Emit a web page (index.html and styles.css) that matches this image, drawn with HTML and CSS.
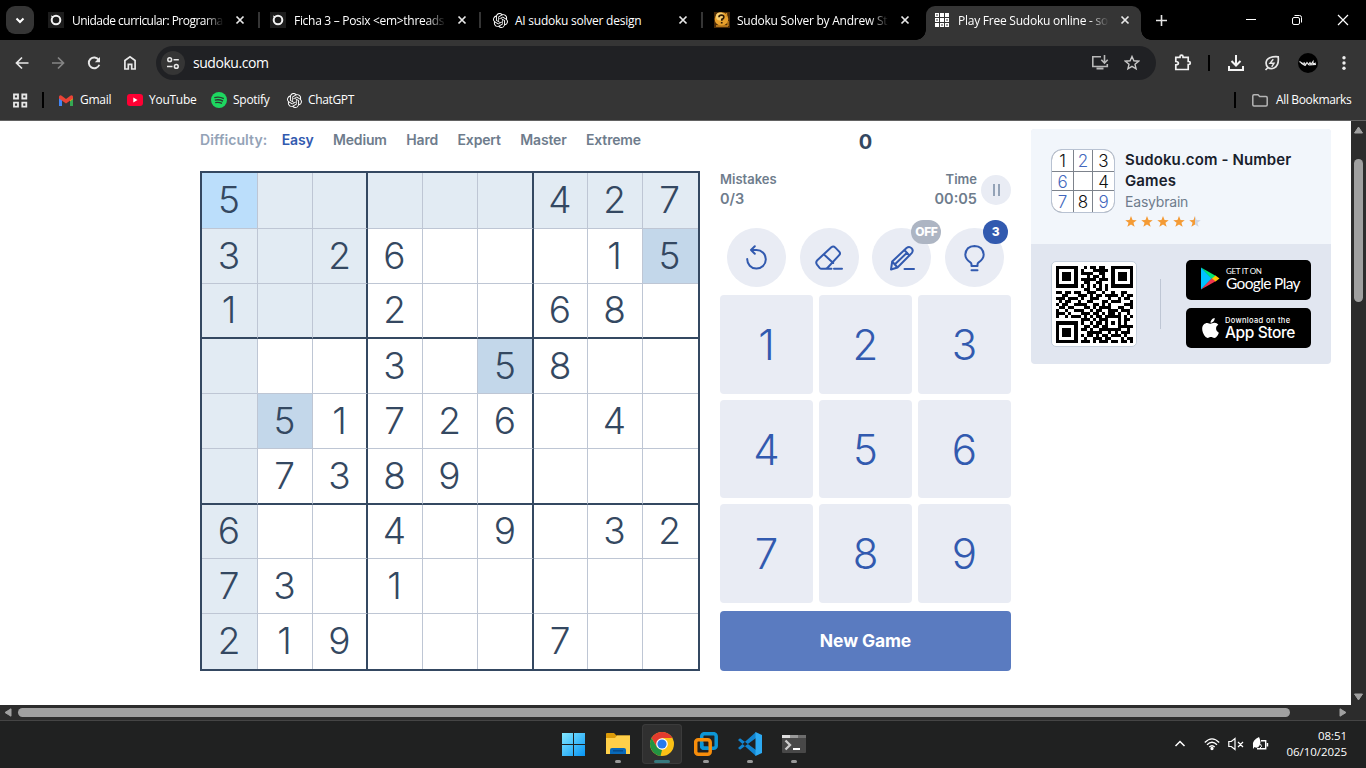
FILE: index.html
```html
<!DOCTYPE html>
<html lang="en">
<head>
<meta charset="utf-8">
<title>Play Free Sudoku online</title>
<link rel="stylesheet" href="styles.css">
</head>
<body>
<svg class="defs" width="0" height="0">
  <symbol id="openai" viewBox="0 0 24 24"><path fill="currentColor" d="M22.2819 9.8211a5.9847 5.9847 0 0 0-.5157-4.9108 6.0462 6.0462 0 0 0-6.5098-2.9A6.0651 6.0651 0 0 0 4.9807 4.1818a5.9847 5.9847 0 0 0-3.9977 2.9 6.0462 6.0462 0 0 0 .7427 7.0966 5.98 5.98 0 0 0 .511 4.9107 6.051 6.051 0 0 0 6.5146 2.9001A5.9847 5.9847 0 0 0 13.2599 24a6.0557 6.0557 0 0 0 5.7718-4.2058 5.9894 5.9894 0 0 0 3.9977-2.9001 6.0557 6.0557 0 0 0-.7475-7.0729zm-9.022 12.6081a4.4755 4.4755 0 0 1-2.8764-1.0408l.1419-.0804 4.7783-2.7582a.7948.7948 0 0 0 .3927-.6813v-6.7369l2.02 1.1686a.071.071 0 0 1 .038.052v5.5826a4.504 4.504 0 0 1-4.4945 4.4944zm-9.6607-4.1254a4.4708 4.4708 0 0 1-.5346-3.0137l.142.0852 4.783 2.7582a.7712.7712 0 0 0 .7806 0l5.8428-3.3685v2.3324a.0804.0804 0 0 1-.0332.0615L9.74 19.9502a4.4992 4.4992 0 0 1-6.1408-1.6464zM2.3408 7.8956a4.485 4.485 0 0 1 2.3655-1.9728V11.6a.7664.7664 0 0 0 .3879.6765l5.8144 3.3543-2.0201 1.1685a.0757.0757 0 0 1-.071 0l-4.8303-2.7865A4.504 4.504 0 0 1 2.3408 7.872zm16.5963 3.8558L13.1038 8.364 15.1192 7.2a.0757.0757 0 0 1 .071 0l4.8303 2.7913a4.4944 4.4944 0 0 1-.6765 8.1042v-5.6772a.79.79 0 0 0-.407-.667zm2.0107-3.0231l-.142-.0852-4.7735-2.7818a.7759.7759 0 0 0-.7854 0L9.409 9.2297V6.8974a.0662.0662 0 0 1 .0284-.0615l4.8303-2.7866a4.4992 4.4992 0 0 1 6.6802 4.66zM8.3065 12.863l-2.02-1.1638a.0804.0804 0 0 1-.038-.0567V6.0742a4.4992 4.4992 0 0 1 7.3757-3.4537l-.142.0805L8.704 5.459a.7948.7948 0 0 0-.3927.6813zm1.0976-2.3654l2.602-1.4998 2.6069 1.4998v2.9994l-2.5974 1.4997-2.6067-1.4997Z"/></symbol>
  <symbol id="close" viewBox="0 0 16 16"><path d="M4.5 4.5l7 7M11.5 4.5l-7 7" stroke="#e8e8e8" stroke-width="1.7"/></symbol>
  <symbol id="moodle" viewBox="0 0 16 16"><path fill="#1c1c1c" d="M0 0h16v16H0z"/><circle cx="8" cy="8" r="4.3" fill="none" stroke="#f4f4f4" stroke-width="2"/><path d="M3 4l3 1" stroke="#f4f4f4"/></symbol>
  <symbol id="star" viewBox="0 0 12 12"><path d="M6 .1l1.55 3.900 4.200.150-3.300 2.600 1.200 4.100L6 8.550l-3.650 2.300 1.200-4.100L.25 4.150l4.200-.15z"/></symbol>
</svg>

<header class="browser">
  <div class="tabs">
    <div class="tab-search"><svg width="28" height="28"><path d="M10.5 12.5l3.5 3.5 3.5-3.5" fill="none" stroke="#fff" stroke-width="2"/></svg></div>
    <div class="tab t1"><svg width="16" height="16"><use href="#moodle"/></svg><span class="title fade">Unidade curricular: Programa</span><svg width="16" height="16"><use href="#close"/></svg></div>
    <div class="tab t2"><svg width="16" height="16"><use href="#moodle"/></svg><span class="title fade">Ficha 3 – Posix &lt;em&gt;threads</span><svg width="16" height="16"><use href="#close"/></svg></div>
    <div class="tab t3"><svg width="15" height="15"><use href="#openai"/></svg><span class="title">AI sudoku solver design</span><svg width="16" height="16"><use href="#close"/></svg></div>
    <div class="tab t4"><svg width="16" height="16"><path fill="#4a2b08" d="M0 0h16v16H0z"/><circle cx="7.5" cy="7" r="6.8" fill="#e7a02c"/><circle cx="6" cy="4.5" r="4" fill="#f8cf71"/><path d="M5 5.2q0-2 2.5-2t2.300 2q0 1.300-2 2.200v1.300M7.700 10v1.600" fill="none" stroke="#2d1904" stroke-width="1.700"/><path d="M2 14h12M12.500 1v4M14 9v5" stroke="#d28c22" stroke-width="1.300"/></svg><span class="title fade">Sudoku Solver by Andrew St</span><svg width="16" height="16"><use href="#close"/></svg></div>
    <div class="tab active"><svg width="16" height="16" fill="#fff"><path d="M1 1h4v4H1zM6 1h4v4H6zM11 1h4v4h-4zM1 6h4v4H1zM6 6h4v4H6zM11 6h4v4h-4zM1 11h4v4H1zM6 11h4v4H6zM11 11h4v4h-4z"/><path fill="#444" d="M2.300 2.300h1.400v1.400H2.300zM2.300 7.300h1.400v1.400H2.300zM12.300 7.300h1.400v1.400h-1.400zM7.300 12.300h1.400v1.400H7.300zM12.300 12.300h1.400v1.400h-1.400z"/></svg><span class="title fade">Play Free Sudoku online - so</span><svg width="16" height="16"><use href="#close"/></svg></div>
    <svg class="newtab" width="40" height="40"><path d="M15 20.500h11M20.500 15v11" stroke="#e5e5e5" stroke-width="1.600"/></svg>
    <div class="window-buttons">
      <svg width="46" height="40"><path d="M18 19.500h10" stroke="#fff"/></svg>
      <svg width="46" height="40" fill="none" stroke="#fff"><rect x="18.500" y="17.500" width="7" height="7" rx="1.500"/><path d="M20.500 15.500h5a2 2 0 0 1 2 2v5"/></svg>
      <svg width="46" height="40"><path d="M18 15l10 10M28 15l-10 10" stroke="#fff" stroke-width="1.200"/></svg>
    </div>
  </div>

  <div class="toolbar">
    <svg class="tool" viewBox="0 0 36 36"><path d="M24.500 18H13M18 12.500L12.500 18l5.500 5.500" fill="none" stroke="#e8e8e8" stroke-width="1.700"/></svg>
    <svg class="tool" viewBox="0 0 36 36"><path d="M12 18h11.500M18 12.500l5.500 5.500-5.500 5.500" fill="none" stroke="#858585" stroke-width="1.700"/></svg>
    <svg class="tool" viewBox="0 0 36 36"><path d="M22.800 15a5.400 5.400 0 1 0 .5 4.700" fill="none" stroke="#e8e8e8" stroke-width="1.900"/><path d="M24 12v5.200h-5.200z" fill="#e8e8e8"/></svg>
    <svg class="tool" viewBox="0 0 36 36"><path d="M12.900 24v-8.500L18 11.800l5.100 3.700V24h-3.400v-4.700h-3.400V24z" fill="none" stroke="#e8e8e8" stroke-width="1.700"/></svg>
    <div class="omnibox">
      <span class="site"><svg width="24" height="24" fill="none" stroke="#e8e8e8" stroke-width="1.500"><circle cx="8.700" cy="8.700" r="1.900"/><path d="M12.500 8.700h5.300M6 15.400h5.500"/><circle cx="15.300" cy="15.400" r="1.900"/></svg></span>
      <span class="url">sudoku.com</span>
      <svg class="install" width="18" height="16" fill="none" stroke="#b8b8b8" stroke-width="1.600"><path d="M10 1.800H1.800v9.700h14.500V9"/><path d="M5.500 13.500h7" stroke-width="2"/><path d="M13.500 0v7.500M10.300 4.800l3.200 3.200 3.200-3.200"/></svg>
      <svg width="16" height="16"><path d="M8 1.500l1.900 4.300 4.700.4-3.600 3.100 1.100 4.600L8 11.400l-4.100 2.500L5 9.300 1.400 6.200l4.700-.4z" fill="none" stroke="#c8c8c8" stroke-width="1.400"/></svg>
    </div>
    <svg class="tool ext" viewBox="0 0 36 36"><path d="M10.800 12.300h4.200v-.9q0-1.300 1.500-1.300t1.500 1.300v.9h5.200v4.200h.6q1.500 0 1.500 1.500t-1.500 1.500h-.6v5H10.800v-4.600q2.600-.2 2.600-1.700t-2.600-1.700z" fill="none" stroke="#f2f2f2" stroke-width="1.700"/></svg>
    <i class="rule"></i>
    <svg class="tool" viewBox="0 0 36 36"><path d="M18 10v10M13.500 16l4.500 4.500 4.500-4.500M11 21v4h14v-4" fill="none" stroke="#f4f4f4" stroke-width="2"/></svg>
    <svg class="tool" viewBox="0 0 36 36"><path d="M24.200 11.800q-11-.7-12 5-.6 3.600 1.800 5.700 2.800 2 6 .5 5.200-2.200 4.200-11.200zM14 22.500L11.500 25" fill="none" stroke="#e8e8e8" stroke-width="1.700"/><path d="M19.300 14.200l-3.300 4h4l-2.300 3.600" fill="none" stroke="#e8e8e8" stroke-width="1.400"/></svg>
    <svg class="tool" viewBox="0 0 36 36"><circle cx="18" cy="18" r="10" fill="#000"/><path d="M9.500 16.500l3 2 2-.5 1 2 1.500-2.500 1.500 2 1.500-2 1 2 2-3v2.500l3-1M11 18l4 2.500M19 20l7-.5" fill="none" stroke="#ededed" stroke-width="1.100"/></svg>
    <svg class="tool" viewBox="0 0 36 36" fill="#eee"><circle cx="18" cy="12.800" r="1.700"/><circle cx="18" cy="18" r="1.700"/><circle cx="18" cy="23.200" r="1.700"/></svg>
  </div>

  <div class="bookmarks">
    <svg width="16" height="15" fill="none" stroke="#e8e8e8" stroke-width="1.800"><path d="M2 1.500h4v4H2zM10.300 1.500h4v4h-4zM2 9.700h4v4H2zM10.300 9.700h4v4h-4z"/></svg>
    <i class="rule"></i>
    <span class="bm gmail"><svg width="14" height="11"><path d="M0 2v9h3V4z" fill="#4285f4"/><path d="M14 2v9h-3V4z" fill="#34a853"/><path d="M11 1.200L14 2v2l-3 2.200z" fill="#fbbc04"/><path d="M0 1.500Q1-.5 3 1l4 3 4-3q2-1.500 3 .5v2L7 8.500 0 3.500z" fill="#ea4335"/></svg><span>Gmail</span></span>
    <span class="bm youtube"><svg width="16" height="12"><rect width="16" height="12" rx="3" fill="#f03"/><path d="M6.300 3.500v5L10.500 6z" fill="#fff"/></svg><span>YouTube</span></span>
    <span class="bm spotify"><svg width="16" height="16"><circle cx="8" cy="8" r="8" fill="#1ed760"/><path d="M3.300 5.600q5-1.500 9.500 1M3.800 8.200q4.300-1.200 8.200.9M4.200 10.600q3.600-.9 6.800.8" fill="none" stroke="#2b3a30" stroke-width="1.300"/></svg><span>Spotify</span></span>
    <span class="bm chatgpt"><svg width="15" height="15"><use href="#openai"/></svg><span>ChatGPT</span></span>
    <i class="rule last"></i>
    <span class="bm all"><svg width="16" height="13"><path d="M.8 2q0-1.200 1.200-1.200h4l1.700 1.700H14q1.200 0 1.200 1.200v7q0 1.200-1.200 1.200H2q-1.200 0-1.200-1.200z" fill="none" stroke="#b5b5b5" stroke-width="1.500"/></svg><span>All Bookmarks</span></span>
  </div>
</header>

<div class="viewport">
  <main class="page">
    <section class="game">
      <nav class="levels"><span class="label">Difficulty:</span><b class="on">Easy</b><b>Medium</b><b>Hard</b><b>Expert</b><b>Master</b><b>Extreme</b></nav>
      <div class="board" id="board"></div>
    </section>
    <section class="controls">
      <div class="score">0</div>
      <div class="stats">
        <div class="stat"><span>Mistakes</span><strong>0/3</strong></div>
        <div class="stat time"><span>Time</span><strong>00:05</strong></div>
        <div class="pause"><i></i><i></i></div>
      </div>
      <div class="actions">
        <div class="round"><svg width="32" height="32"><path d="M7.200 17a9.300 9.300 0 1 0 9.300-9h-5.500M14.800 4.200L11 8l3.800 3.800"/></svg></div>
        <div class="round"><svg width="32" height="32"><path d="M4.300 18.200L18.300 5.300q2-1.600 3.800.1l4.300 4.500q1.300 1.600-.2 3.200L14.800 25.500q-1 1.200-2.600 1.200H8.600q-1.200 0-2-.9l-2.600-3.200q-1.700-2.400.3-4.400zM11 12.500l9.200 8.500M11 26.700h7.500M21 26.700h8"/></svg></div>
        <div class="round"><svg width="32" height="32"><path d="M5 27.500l1.200-8L20.500 6q2.700-2.200 5 .1t.2 5L11.500 25.500zM6.200 19.500l5.300 6M18.300 8l5.300 5.600M8.700 22.500L21 10.700M18.500 27h9.500"/></svg><span class="badge off">OFF</span></div>
        <div class="round"><svg width="32" height="32"><path d="M12.500 24v-1.500q0-1.300-1.200-2.200Q6.300 17 6.300 12.500 7 4.300 15.500 3.900q8.500.4 9.200 8.600 0 4.500-5 7.800-1.200.9-1.200 2.200V24zM12.500 28.300h6"/></svg><span class="badge hint">3</span></div>
      </div>
      <div class="numpad"><b>1</b><b>2</b><b>3</b><b>4</b><b>5</b><b>6</b><b>7</b><b>8</b><b>9</b></div>
      <div class="new-game">New Game</div>
    </section>
    <aside class="promo">
      <div class="app">
        <div class="app-icon"><i>1</i><i class="b">2</i><i>3</i><i class="b">6</i><i></i><i>4</i><i class="b">7</i><i>8</i><i class="b">9</i></div>
        <div class="app-text">
          <h2>Sudoku.com - Number Games</h2>
          <p>Easybrain</p>
          <div class="stars"><svg><use href="#star"/></svg><svg><use href="#star"/></svg><svg><use href="#star"/></svg><svg><use href="#star"/></svg><svg viewBox="0 0 12 12"><path fill="#cfd6e3" d="M6 .1l1.550 3.900 4.200.150-3.300 2.600 1.200 4.100L6 8.550z"/><path d="M6 .1L4.450 4 .25 4.150l3.300 2.600-1.200 4.100L6 8.550z"/></svg></div>
        </div>
      </div>
      <div class="stores">
        <div class="qr"><svg id="qr" width="77" height="77" viewBox="0 0 25 25" shape-rendering="crispEdges"></svg></div>
        <i class="divider"></i>
        <div class="links">
          <div class="store google"><svg width="20" height="23"><path d="M1 .5v22L12 11.500z" fill="#00c3ff"/><path d="M1 .5L16 9l-4 3z" fill="#00e676"/><path d="M1 22.500L16 14l-4-3z" fill="#f0364d"/><path d="M15.500 8.500l4 3-4 3-3.500-3z" fill="#ffc400"/></svg><span><small>GET IT ON</small>Google Play</span></div>
          <div class="store apple"><svg width="17" height="22" viewBox="0 28 384 456" fill="#fff"><path d="M318.700 268.700c-.2-36.700 16.400-64.400 50-84.800-18.800-26.900-47.200-41.700-84.700-44.600-35.500-2.800-74.300 20.700-88.500 20.700-15 0-49.400-19.700-76.400-19.700C63.300 141.200 4 184.800 4 273.500q0 39.300 14.400 81.200c12.800 36.700 59 126.700 107.200 125.200 25.200-.6 43-17.900 75.800-17.900 31.800 0 48.300 17.900 76.400 17.900 48.600-.7 90.400-82.500 102.600-119.300-65.200-30.700-61.700-90-61.700-91.900zm-56.600-164.200c27.300-32.400 24.800-61.900 24-72.500-24.100 1.400-52 16.400-67.900 34.900-17.500 19.800-27.800 44.300-25.600 71.900 26.100 2 49.900-11.400 69.500-34.300z"/></svg><span><small>Download on the</small>App Store</span></div>
        </div>
      </div>
    </aside>
  </main>
  <div class="vscroll">
    <svg width="11" height="8"><path d="M5.500 1L9.500 7h-8z" stroke="#a0a0a0" stroke-linejoin="round"/></svg><i></i><svg class="end" width="11" height="8"><path d="M5.500 7L1.500 1h8z" stroke="#a0a0a0" stroke-linejoin="round"/></svg>
  </div>
</div>
<div class="hscroll"><svg width="8" height="9"><path d="M1 4.500L7 .8v7.400z" stroke="#a0a0a0" stroke-linejoin="round"/></svg><i></i><svg width="8" height="9"><path d="M7 4.500L1 .8v7.400z" stroke="#a0a0a0" stroke-linejoin="round"/></svg></div>

<footer class="taskbar">
  <div class="apps">
    <span><svg width="24" height="24"><defs><linearGradient id="win" x2="1" y2="1"><stop stop-color="#83e8ff"/><stop offset="1" stop-color="#0795f5"/></linearGradient></defs><path fill="url(#win)" d="M0 1h11v11H0zM12 1h11v11H12zM0 13h11v11H0zM12 13h11v11H12z"/></svg></span>
    <span class="run"><svg width="24" height="24"><path d="M0 2q0-1 1-1h7l2.500 2.500H24V10H0z" fill="#dc9b08"/><path d="M0 6h9l2-2.500h13V22H0z" fill="#ffd04a"/><path d="M4 22v-4q0-2 2-2h12q2 0 2 2v4z" fill="#0869ba"/><path d="M7 18.800h10" stroke="#064b8d" stroke-width="1.500"/></svg></span>
    <span class="run current"><svg width="24" height="24"><circle cx="12" cy="12" r="12" fill="#fbc116"/><path d="M1.600 6A12 12 0 0 1 22.400 6H12L6.800 15z" fill="#e33b2e"/><path d="M1.600 6l5.200 9 5.200 3-1.500 5.900A12 12 0 0 1 1.600 6z" fill="#229342"/><circle cx="12" cy="12" r="5.800" fill="#fff"/><circle cx="12" cy="12" r="4.600" fill="#2679ed"/></svg></span>
    <span class="run"><svg width="24" height="24" fill="none" stroke-width="3.500"><rect x="7.700" y="1.700" width="14.500" height="14.500" rx="2.500" stroke="#0d96d6"/><rect x="1.700" y="7.700" width="14.500" height="14.500" rx="2.500" stroke="#f78d0b"/><path d="M7.700 11v3q0 2.200 2.500 2.200h4" stroke="#0d96d6"/></svg></span>
    <span class="run"><svg width="24" height="24"><path d="M0 8l2-1.700L18 18v6zM0 16l2 1.700L18 6V0z" fill="#1184d0"/><path d="M17.500 0L24 3v18l-6.500 3z" fill="#2daaf2"/></svg></span>
    <span class="run"><svg width="24" height="24"><rect y="3" width="24" height="18" rx="1" fill="#484848"/><path d="M0 3h8v3H0z" fill="#ddd"/><path d="M8 3h8v3H8z" fill="#999"/><path d="M16 3h8v3h-8z" fill="#6d6d6d"/><path d="M3.500 8.500L8 13l-4.500 4.500" fill="none" stroke="#ccc" stroke-width="2.300"/><path d="M11 17h7" stroke="#fff" stroke-width="2"/></svg></span>
  </div>
  <div class="tray">
    <svg width="12" height="12"><path d="M1.500 8L6 3.500 10.500 8" fill="none" stroke="#fff" stroke-width="1.500"/></svg>
    <svg class="wifi" width="16" height="14" fill="none" stroke="#fff" stroke-width="1.300"><path d="M.8 5.500q7.200-7.200 14.400 0M3 7.700q5-4.800 10 0M5.300 10q2.700-2.600 5.400 0"/><circle cx="8" cy="11.500" r="1" fill="#fff"/></svg>
    <svg class="sound" width="16" height="14" fill="none" stroke="#fff" stroke-width="1.200"><path d="M.8 4.500h2.500L7 1.500v11L3.300 9.500H.8zM10 5l5 5M15 5l-5 5"/></svg>
    <svg class="battery" width="17" height="14"><path d="M9 3.800h4.700v7.900H5M15.500 6v3.500" fill="none" stroke="#fff" stroke-width="1.400"/><path d="M1 8.500q-1-5.500 6-8.500 2.500 5 .5 8.500T2.500 10L1 12z" fill="#fff"/><path d="M8.500 7l1 2.500-2 2" stroke="#fff" fill="none"/></svg>
    <div class="clock">08:51<br>06/10/2025</div>
  </div>
</footer>
<script src="script.js"></script>
</body>
</html>
```

FILE: styles.css
```css
* { box-sizing: border-box; }
body { margin: 0; width: 1366px; height: 768px; overflow: hidden; background: #fff; font-family: Inter, "Liberation Sans", sans-serif; }
svg { display: block; flex: none; }
.defs { position: absolute; }
i { font-style: normal; }

.browser { height: 121px; background: #353535; border-bottom: 1px solid #626262; color: #fff; font-family: "Open Sans", "Noto Sans", sans-serif; font-size: 12px; }
.tabs { height: 40px; background: #000; display: flex; }
.tab-search { width: 28px; height: 28px; margin: 6px 4px 0 6px; border-radius: 9px; background: #353535; }
.tab { display: flex; align-items: center; height: 40px; }
.tab .title { width: 152px; margin: 0 8px; padding-top: 1px; white-space: nowrap; letter-spacing: -.24px; line-height: 18px; }
.fade { -webkit-mask-image: linear-gradient(90deg, #000 87%, transparent); mask-image: linear-gradient(90deg, #000 87%, transparent); }
.t1 { width: 222px; padding-left: 10px; }
.t2 { width: 221px; padding-left: 10px; }
.t3 { width: 222px; padding-left: 12px; }
.t4 { width: 223px; padding-left: 11px; }
.t1, .t2, .t3 { background: linear-gradient(#353535, #353535) right center / 2px 16px no-repeat; }
.t1 .title { letter-spacing: -.53px; }
.t2 .title { letter-spacing: -.3px; }
.t3 .title, .t4 .title { margin-left: 7px; }
.tab.active { position: relative; width: 215px; height: 34px; margin-top: 6px; padding: 0 0 6px 8px; background: #353535; border-radius: 9px 9px 0 0; }
.tab.active::before, .tab.active::after { content: ""; position: absolute; bottom: 0; width: 10px; height: 10px; }
.tab.active::before { right: 100%; background: radial-gradient(circle at 0 0, #000 9.500px, #353535 10px); }
.tab.active::after { left: 100%; background: radial-gradient(circle at 100% 0, #000 9.500px, #353535 10px); }
.active .title { width: 151px; }
.newtab { margin-right: 46px; }
.window-buttons { display: flex; margin-left: 1px; }

.toolbar { display: flex; align-items: center; height: 46px; padding-left: 4px; }
.tool { width: 36px; height: 36px; }
.omnibox { width: 1000px; height: 34px; margin-left: 8px; border-radius: 17px; background: #202124; display: flex; align-items: center; padding: 0 16px 0 5px; }
.site { width: 24px; height: 24px; border-radius: 50%; background: #353535; }
.url { flex: 1; margin-left: 8px; padding-bottom: 1px; font-size: 14px; letter-spacing: -.5px; letter-spacing: -.45px; }
.install { margin-right: 15px; }
.ext { margin-left: 9px; }
.rule { width: 2px; height: 16px; background: #000; }
.toolbar .rule { margin: 0 8px 0 7px; }
.bookmarks { display: flex; align-items: center; height: 28px; padding-left: 12px; }
.bookmarks .rule { margin: 0 15px 0 14px; }
.bookmarks .last { margin: 0 16px 0 auto; }
.bm { display: flex; align-items: center; gap: 6px; letter-spacing: -.27px; white-space: nowrap; }
.bm span { padding-bottom: 1px; }
.gmail { width: 68px; gap: 7px; }
.youtube { width: 84px; }
.spotify { width: 76px; }
.all { gap: 8px; width: 114px; letter-spacing: -.36px; }
.chatgpt { letter-spacing: -.35px; }

.viewport { display: flex; height: 584px; }
.page { width: 1351px; padding-left: 200px; display: flex; gap: 20px; }
.game { width: 500px; }
.levels { height: 50px; padding-top: 9px; display: flex; gap: 19.500px; color: #6e7c8c; font-size: 14px; line-height: 20px; letter-spacing: -.17px; white-space: nowrap; }
.levels b { font-weight: 600; }
.levels .label { margin-right: -5px; color: #94a3b7; font-weight: 600; letter-spacing: .08px; }
.levels .on { color: #325aaf; }
.board { width: 500px; height: 500px; border: 2px solid #344861; display: grid; grid-template-columns: 56px 55px 55px 55px 55px 56px 54px 55px 55px; grid-template-rows: 56px 55px 55px 55px 55px 56px 54px 55px 55px; }
.cell { border: 0 solid #bec6d4; border-width: 0 1px 1px 0; padding: 0 1px 2px 0; display: flex; align-items: center; justify-content: center; color: #344861; font-size: 37px; font-weight: 300; line-height: 1; }
.area { background: #e2ebf3; }
.same { background: #c3d7ea; }
.picked { background: #bbdefb; }
.edge-r { border-right: 2px solid #344861; padding-right: 0; }
.edge-b { border-bottom: 2px solid #344861; }
.last-c { border-right: 0; padding-right: 2px; }
.last-r { border-bottom: 0; padding-bottom: 3px; }

.controls { width: 291px; }
.score { height: 50px; padding-top: 9px; text-align: center; color: #344861; font-size: 20px; font-weight: 700; line-height: 24px; }
.stats { display: flex; height: 49px; justify-content: flex-end; color: #6e7c8c; }
.stat { flex: 1; display: flex; flex-direction: column; margin-top: -1px; font-size: 13px; font-weight: 600; line-height: 19px; letter-spacing: 0; }
.stat strong { font-size: 14.500px; font-weight: 600; }
.time { text-align: right; }
.pause { width: 30px; height: 30px; margin: 4px 0 0 4px; border-radius: 50%; background: #e9ecf4; display: flex; gap: 3px; justify-content: center; align-items: center; }
.pause i { width: 2px; height: 12px; background: #94a3b7; }
.actions { display: grid; grid-template-columns: repeat(4, 1fr); justify-items: center; padding-top: 8px; height: 75px; }
.round { position: relative; width: 59px; height: 59px; border-radius: 50%; background: #e9ecf4; display: flex; align-items: center; justify-content: center; }
.round svg { fill: none; stroke: #325aaf; stroke-width: 2; stroke-linejoin: round; stroke-linecap: round; }
.badge { position: absolute; top: -8px; height: 24px; border-radius: 12px; color: #fff; font-size: 12px; font-weight: 800; line-height: 24px; text-align: center; }
.off { left: 39px; width: 30px; background: #adb5c3; letter-spacing: -.3px; }
.hint { left: 38px; width: 25px; background: #325aaf; }
.numpad { display: grid; grid-template-columns: repeat(3, 93px); grid-template-rows: 99px 98px 99px; gap: 6px; }
.numpad b { background: #e9ecf4; border-radius: 4px; color: #325aaf; font-size: 42px; font-weight: 300; display: flex; align-items: center; justify-content: center; }
.new-game { height: 60px; margin-top: 8px; border-radius: 4px; background: #5a7bc0; color: #fff; font-size: 17.500px; font-weight: 700; line-height: 60px; text-align: center; letter-spacing: -.12px; }

.promo { width: 300px; height: 235px; margin-top: 8px; border-radius: 4px; overflow: hidden; background: #e1e6f0; }
.app { height: 115px; padding: 20px; display: flex; gap: 10px; background: #f2f6fb; }
.app-icon { width: 64px; height: 64px; flex: none; border: 1px solid #b8c2d2; border-radius: 11px; overflow: hidden; background: #7d838c; display: grid; grid-template-columns: 21px 18px 21px; grid-template-rows: 21px 18px 21px; gap: 1px; color: #111; font-size: 17px; font-weight: 300; line-height: 1; }
.app-icon i { background: #fff; padding-top: 2px; display: flex; align-items: center; justify-content: center; }
.app-icon .b { color: #4267bd; }
.app-text h2 { margin: 0; color: #18202b; font-size: 15px; font-weight: 600; line-height: 21px; letter-spacing: .12px; }
.app-text p { margin: 0; color: #6e7c8c; font-size: 14px; line-height: 22px; letter-spacing: -.2px; }
.stars { display: flex; gap: 4px; margin-top: 3px; fill: #f49b35; }
.stars svg { width: 12px; height: 12px; }
.stores { height: 120px; padding: 16px 20px; display: flex; align-items: center; }
.qr { width: 86px; height: 86px; border: 1px solid #c3cedc; border-radius: 5px; background: #fff; display: flex; align-items: center; justify-content: center; }
.divider { width: 1px; height: 50px; margin: 0 25px 0 23px; background: #bec6d4; }
.links { display: grid; gap: 8px; }
.store { width: 125px; height: 40px; border-radius: 5px; background: #000; color: #fff; display: flex; align-items: center; white-space: nowrap; }
.store small { display: block; line-height: 9px; }
.google { padding: 0 0 3px 14px; gap: 6px; font: 400 15.500px/15px Lato, sans-serif; letter-spacing: -.75px; letter-spacing: -.65px; }
.google small { font: 8px/9px Lato, sans-serif; letter-spacing: -.3px; }
.apple { padding-left: 16px; gap: 6px; font-size: 15.500px; font-weight: 500; line-height: 15px; letter-spacing: -.4px; }
.apple small { font-size: 7.500px; letter-spacing: .33px; }

.vscroll { width: 15px; background: #2c2c2c; fill: #a0a0a0; display: flex; flex-direction: column; align-items: center; padding: 5px 0 4px; }
.vscroll i { width: 9px; height: 143px; margin-top: 25px; border-radius: 5px; background: #a0a0a0; }
.vscroll .end { margin-top: auto; }
.hscroll { height: 15px; background: #2c2c2c; fill: #a0a0a0; display: flex; align-items: center; padding-left: 4px; }
.hscroll i { width: 1272px; height: 9px; margin: 0 49px 0 6px; border-radius: 5px; background: #a0a0a0; }

.taskbar { height: 48px; border-top: 1px solid #454545; background: #202121; display: flex; padding-left: 554px; color: #fff; }
.apps { display: flex; gap: 4px; padding-top: 3px; }
.apps span { width: 40px; height: 40px; padding: 8px; border-radius: 4px; position: relative; }
.apps .current { background: #303030; box-shadow: inset 0 0 0 1px #3b3b3b; }
.run::after { content: ""; position: absolute; left: 17px; bottom: 1px; width: 6px; height: 3px; border-radius: 2px; background: #999; }
.current::after { left: 12px; width: 16px; background: #37797e; }
.tray { display: flex; align-items: center; margin-left: auto; padding: 0 19px 2px 0; }
.wifi { margin-left: 18px; }
.sound { margin-left: 8px; }
.battery { margin-left: 8px; }
.clock { width: 78px; font: 11.500px/16px "Open Sans", sans-serif; text-align: right; letter-spacing: -.05px; }
```

FILE: script.js
```js
const puzzle = [
  "5.....427",
  "3.26...15",
  "1..2..68.",
  "...3.58..",
  ".51726.4.",
  ".7389....",
  "6..4.9.32",
  "73.1.....",
  "219...7.."
];
const board = document.getElementById("board");
puzzle.forEach((row, r) => [...row].forEach((digit, c) => {
  const cell = document.createElement("div");
  const names = ["cell"];
  if (r === 0 && c === 0) names.push("picked");
  else if (digit === "5") names.push("same");
  else if (r === 0 || c === 0 || (r < 3 && c < 3)) names.push("area");
  if (c === 2 || c === 5) names.push("edge-r");
  if (r === 2 || r === 5) names.push("edge-b");
  if (c === 8) names.push("last-c");
  if (r === 8) names.push("last-r");
  cell.className = names.join(" ");
  if (digit !== ".") cell.textContent = digit;
  board.append(cell);
}));

const modules = [
  "1111111001011011001111111",
  "1000001010001111101000001",
  "1011101011110011001011101",
  "1011101000101101001011101",
  "1011101011111011101011101",
  "1000001001100110001000001",
  "1111111010101010101111111",
  "0000000001100110100000000",
  "1101101100111001001001100",
  "0011000111010110111101011",
  "1110111010011100010010110",
  "0101100100110001101110001",
  "1011001111001101010000111",
  "0110110001101011110011001",
  "1001001110010110011101110",
  "1110100011101101011010010",
  "1001011101010110111110101",
  "0000000011101011100010110",
  "1111111010010110101010100",
  "1000001001101101100011111",
  "1011101011010011111110010",
  "1011101000111110010101110",
  "1011101010110101101110100",
  "1000001001001110110001011",
  "1111111011101011101101101"
];
document.getElementById("qr").innerHTML = '<path d="' + modules.map((row, y) =>
  [...row].map((on, x) => on === "1" ? `M${x} ${y}h1v1h-1z` : "").join("")).join("") + '"/>';
```
